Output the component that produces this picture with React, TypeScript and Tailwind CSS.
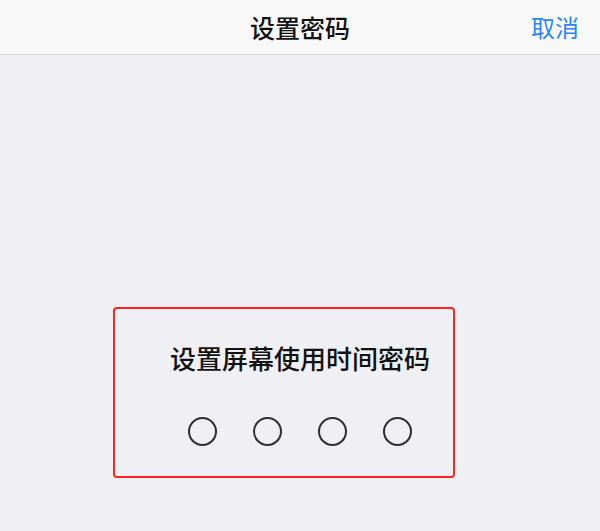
export default function App() {
  return (
    <div
      className="w-[600px] h-[531px] bg-[#efeff4] flex flex-col"
      style={{ fontFamily: '"Noto Sans CJK SC", "Noto Sans", sans-serif' }}
    >
      <div className="h-[55px] bg-[#f8f8f8] border-b border-[#d6d6da] flex items-center relative shrink-0">
        <div className="flex-1 text-center text-[25px] font-medium text-[#111] leading-none">
          设置密码
        </div>
        <div className="absolute right-[21px] top-0 h-full flex items-center text-[24px] text-[#2f86ef] leading-none">
          取消
        </div>
      </div>

      <div className="mt-[252px] ml-[113px] w-[342px] h-[171px] border-2 border-[#ff2323] rounded-[4px] flex flex-col items-center pl-[32px] pt-[34px]">
        <div className="text-[26px] font-medium text-[#111] leading-[30px]">
          设置屏幕使用时间密码
        </div>
        <div className="flex gap-[36px] mt-[44px]">
          <span className="w-[29px] h-[29px] rounded-full border-2 border-[#2e2e2e]"></span>
          <span className="w-[29px] h-[29px] rounded-full border-2 border-[#2e2e2e]"></span>
          <span className="w-[29px] h-[29px] rounded-full border-2 border-[#2e2e2e]"></span>
          <span className="w-[29px] h-[29px] rounded-full border-2 border-[#2e2e2e]"></span>
        </div>
      </div>
    </div>
  );
}
